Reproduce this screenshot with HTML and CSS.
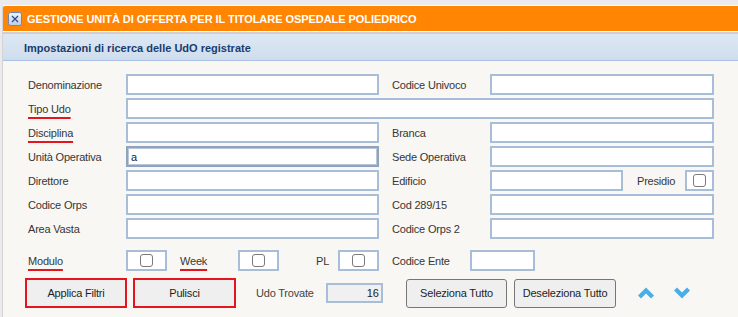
FILE: index.html
```html
<!DOCTYPE html>
<html lang="it">
<head>
<meta charset="utf-8">
<title>Gestione UdO</title>
<link rel="stylesheet" href="styles.css">
</head>
<body>
<div class="panel">
  <div class="titlebar">
    <span class="close-icon">
      <svg width="14" height="14" viewBox="0 0 14 14">
        <defs>
          <linearGradient id="cg" x1="0" y1="0" x2="0" y2="1">
            <stop offset="0" stop-color="#eef3fb"/>
            <stop offset="1" stop-color="#bccde9"/>
          </linearGradient>
        </defs>
        <rect x="0.5" y="0.5" width="13" height="13" rx="2" ry="2" fill="url(#cg)" stroke="#6f86b3"/>
        <path d="M4 4 L10 10 M10 4 L4 10" stroke="#2b4a8a" stroke-width="1.2" fill="none"/>
      </svg>
    </span>
    <span class="title-text">GESTIONE UNITÀ DI OFFERTA PER IL TITOLARE OSPEDALE POLIEDRICO</span>
  </div>
  <div class="title-sep"></div>
  <div class="subheader">Impostazioni di ricerca delle UdO registrate</div>

  <div class="content">
    <div class="form-grid">
      <label class="lbl">Denominazione</label>
      <input class="field" type="text">
      <label class="lbl lbl-r">Codice Univoco</label>
      <input class="field" type="text">

      <label class="lbl"><span class="req">Tipo Udo</span></label>
      <input class="field span3" type="text">

      <label class="lbl"><span class="req">Disciplina</span></label>
      <input class="field" type="text">
      <label class="lbl lbl-r">Branca</label>
      <input class="field" type="text">

      <label class="lbl">Unità Operativa</label>
      <input class="field focused" type="text" value="a">
      <label class="lbl lbl-r">Sede Operativa</label>
      <input class="field" type="text">

      <label class="lbl">Direttore</label>
      <input class="field" type="text">
      <label class="lbl lbl-r">Edificio</label>
      <div class="edificio">
        <input class="field field-edificio" type="text">
        <span class="lbl presidio">Presidio</span>
        <span class="chkbox chk-presidio"><span class="chk"></span></span>
      </div>

      <label class="lbl">Codice Orps</label>
      <input class="field" type="text">
      <label class="lbl lbl-r">Cod 289/15</label>
      <input class="field" type="text">

      <label class="lbl">Area Vasta</label>
      <input class="field" type="text">
      <label class="lbl lbl-r">Codice Orps 2</label>
      <input class="field" type="text">
    </div>

    <div class="flags-row">
      <span class="lbl flag-lbl-modulo"><span class="req">Modulo</span></span>
      <span class="chkbox"><span class="chk"></span></span>
      <span class="lbl flag-lbl-week"><span class="req">Week</span></span>
      <span class="chkbox"><span class="chk"></span></span>
      <span class="lbl flag-lbl-pl">PL</span>
      <span class="chkbox"><span class="chk"></span></span>
      <span class="lbl flag-lbl-ente">Codice Ente</span>
      <input class="field field-ente" type="text">
    </div>

    <div class="actions-row">
      <button class="btn btn-red btn-applica">Applica Filtri</button>
      <button class="btn btn-red btn-pulisci">Pulisci</button>
      <span class="lbl trovate-lbl">Udo Trovate</span>
      <span class="trovate-field">16</span>
      <button class="btn btn-gray btn-sel">Seleziona Tutto</button>
      <button class="btn btn-gray btn-desel">Deseleziona Tutto</button>
      <span class="chev chev-up">
        <svg width="16" height="12" viewBox="0 0 16 12"><polygon points="0,8.5 8,0.5 16,8.5 13,11.5 8,6.5 3,11.5" fill="#4aaee9"/></svg>
      </span>
      <span class="chev chev-down">
        <svg width="16" height="12" viewBox="0 0 16 12"><polygon points="0,3.5 3,0.5 8,5.5 13,0.5 16,3.5 8,11.5" fill="#4aaee9"/></svg>
      </span>
    </div>
  </div>
</div>
</body>
</html>
```

FILE: styles.css
```css
* {
  box-sizing: border-box;
}

html, body {
  margin: 0;
  padding: 0;
  height: 100%;
  overflow: hidden;
}

body {
  background: #ebebee;
  font-family: "Liberation Sans", Arial, sans-serif;
  font-size: 11px;
  color: #333;
}

.panel {
  margin: 5px 0 0 2px;
  border-left: 1px solid #d3d3d8;
  border-top: 1px solid #ffffff;
  border-top-left-radius: 3px;
  background: #f8f7f3;
  height: 312px;
  overflow: hidden;
}

.titlebar {
  height: 26px;
  background: #ff8503;
  display: flex;
  align-items: center;
  padding-left: 5px;
  border-bottom: 1px solid #ffffff;
}

.close-icon {
  display: flex;
  width: 14px;
  height: 14px;
}

.title-text {
  margin-left: 5px;
  color: #ffffff;
  font-weight: bold;
  font-size: 11px;
  letter-spacing: -0.05px;
}

.title-sep {
  height: 2px;
  background: #cfcfd2;
}

.subheader {
  height: 27px;
  background: linear-gradient(#dde8f4, #cedded);
  border-bottom: 1px solid #a9c2e3;
  color: #1b3c6c;
  font-weight: bold;
  font-size: 11px;
  display: flex;
  align-items: center;
  padding-left: 21px;
  padding-top: 1px;
}

.content {
  padding-top: 13px;
}

.lbl {
  color: #363636;
  letter-spacing: -0.2px;
  white-space: nowrap;
}

.form-grid {
  display: grid;
  grid-template-columns: 98px 253px 111px 224px;
  grid-auto-rows: 21px;
  row-gap: 3px;
  padding-left: 25px;
  align-items: center;
}

.lbl-r {
  padding-left: 13px;
}

.req {
  text-decoration: underline;
  text-decoration-color: #e3161f;
  text-decoration-thickness: 2px;
  text-underline-offset: 4px;
}

.field {
  height: 21px;
  width: 100%;
  border: 2px solid #a8bed8;
  background: #ffffff;
  margin: 0;
  padding: 0 3px;
  font-family: "Liberation Sans", Arial, sans-serif;
  font-size: 11px;
  color: #222;
  outline: none;
  border-radius: 0;
}

.span3 {
  grid-column: 2 / span 3;
}

.focused {
  border: 2px solid #8fa4bb;
  box-shadow: inset 0 0 0 1px #b9c8d8;
}

.edificio {
  display: flex;
  align-items: center;
  height: 21px;
}

.field-edificio {
  width: 133px;
  flex: none;
}

.presidio {
  margin-left: 14px;
}

.chkbox {
  display: flex;
  align-items: center;
  justify-content: center;
  width: 41px;
  height: 21px;
  border: 2px solid #a8bed8;
  background: #ffffff;
  flex: none;
}

.chk-presidio {
  width: 29px;
  margin-left: auto;
}

.chk {
  width: 13px;
  height: 13px;
  border: 1px solid #7a7a7a;
  border-radius: 3px;
  background: #ffffff;
}

.flags-row {
  display: flex;
  align-items: center;
  height: 21px;
  margin-top: 11px;
  padding-left: 25px;
}

.flag-lbl-modulo {
  width: 98px;
}

.flag-lbl-week {
  width: 58px;
  margin-left: 13px;
}

.flag-lbl-pl {
  width: 22px;
  margin-left: 37px;
}

.flag-lbl-ente {
  width: 78px;
  margin-left: 13px;
}

.field-ente {
  width: 65px;
}

.actions-row {
  display: flex;
  align-items: center;
  margin-top: 7px;
  padding-left: 22px;
  height: 30px;
}

.btn {
  font-family: "Liberation Sans", Arial, sans-serif;
  font-size: 11px;
  letter-spacing: -0.2px;
  color: #1e1e1e;
  background: #efefef;
  margin: 0;
  padding: 0;
  cursor: pointer;
}

.btn-red {
  height: 30px;
  border: 2px solid #e3161f;
  border-radius: 0;
}

.btn-applica {
  width: 102px;
}

.btn-pulisci {
  width: 103px;
  margin-left: 6px;
}

.trovate-lbl {
  width: 70px;
  margin-left: 20px;
  color: #444;
}

.trovate-field {
  width: 57px;
  height: 20px;
  border: 2px solid #a8bed8;
  background: #f0f0f0;
  display: flex;
  align-items: center;
  justify-content: flex-end;
  padding-right: 2px;
  color: #222;
}

.btn-gray {
  height: 29px;
  border: 1px solid #767676;
  border-radius: 3px;
}

.btn-sel {
  width: 101px;
  margin-left: 23px;
}

.btn-desel {
  width: 102px;
  margin-left: 7px;
}

.chev {
  display: flex;
  width: 16px;
  height: 12px;
}

.chev-up {
  margin-left: 22px;
}

.chev-down {
  margin-left: 20px;
}
```
